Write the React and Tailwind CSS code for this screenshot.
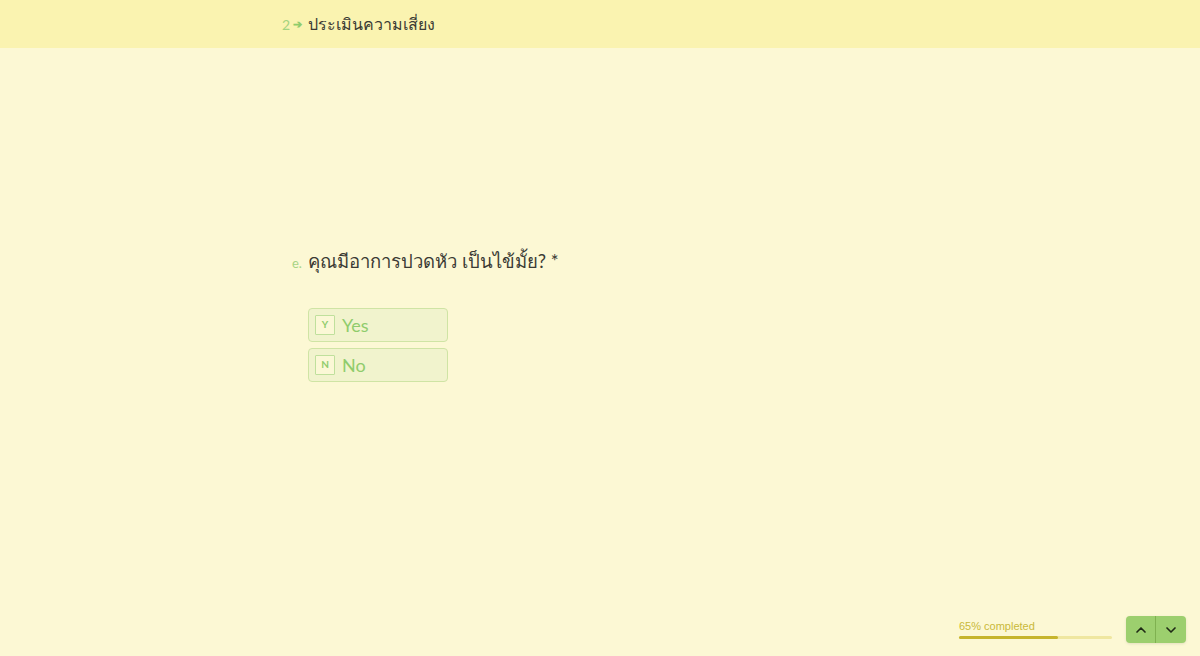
import React from 'react';
import { ChevronUp, ChevronDown } from 'lucide-react';

const font = { fontFamily: 'Lato, "Noto Sans", sans-serif' };

const Choice = ({ k, label }) => (
  <button className="flex items-center w-[140px] h-[34px] px-[6px] rounded-[4px] border border-[#cfe4a4] bg-[#f1f3cd] text-left">
    <span className="w-[20px] h-[20px] flex items-center justify-center border border-[#bfe09c] bg-[#fbf8d6] text-[10px] font-bold text-[#8fcc6c] rounded-[1px]">{k}</span>
    <span className="ml-[7px] text-[18px] text-[#8fcc6c] leading-none">{label}</span>
  </button>
);

export default function App() {
  return (
    <div className="w-[1200px] h-[656px] bg-[#fcf8d4] flex flex-col overflow-hidden relative" style={font}>
      <div className="h-[48px] bg-[#faf3b0] flex items-center pl-[282px]">
        <span className="text-[14px] text-[#a3d47f]">2</span>
        <span className="text-[11px] text-[#8fcc6c] ml-[3px] font-bold">➔</span>
        <span className="ml-[6px] text-[16px] text-[#3b3b34]">ประเมินความเสี่ยง</span>
      </div>
      <div className="flex-1 flex flex-col pl-[292px] pt-[200px]">
        <div className="flex items-baseline">
          <span className="w-[16px] text-[13px] text-[#a7d485]">e.</span>
          <span className="text-[18.5px] text-[#3b3b34]">คุณมีอาการปวดหัว เป็นไข้มั้ย? *</span>
        </div>
        <div className="flex flex-col gap-[6px] mt-[32px] ml-[16px]">
          <Choice k="Y" label="Yes" />
          <Choice k="N" label="No" />
        </div>
      </div>
      <div className="absolute left-[959px] top-[621px] w-[153px]">
        <div className="text-[11px] text-[#c9b93a] leading-none" style={{ fontFamily: '"Liberation Sans", sans-serif' }}>65% completed</div>
        <div className="mt-[4px] h-[3px] bg-[#efe7a0] rounded-full">
          <div className="h-full bg-[#c6b52d] rounded-full" style={{ width: '65%' }} />
        </div>
      </div>
      <div className="absolute left-[1126px] top-[616px] flex h-[27px] rounded-[4px] overflow-hidden bg-[#9ccf6e] shadow-[0_1px_3px_rgba(0,0,0,0.1)]">
        <div className="w-[30px] flex items-center justify-center border-r border-[#7fb150]">
          <ChevronUp size={16} strokeWidth={2.5} color="#1f2a16" />
        </div>
        <div className="w-[30px] flex items-center justify-center">
          <ChevronDown size={16} strokeWidth={2.5} color="#1f2a16" />
        </div>
      </div>
    </div>
  );
}
